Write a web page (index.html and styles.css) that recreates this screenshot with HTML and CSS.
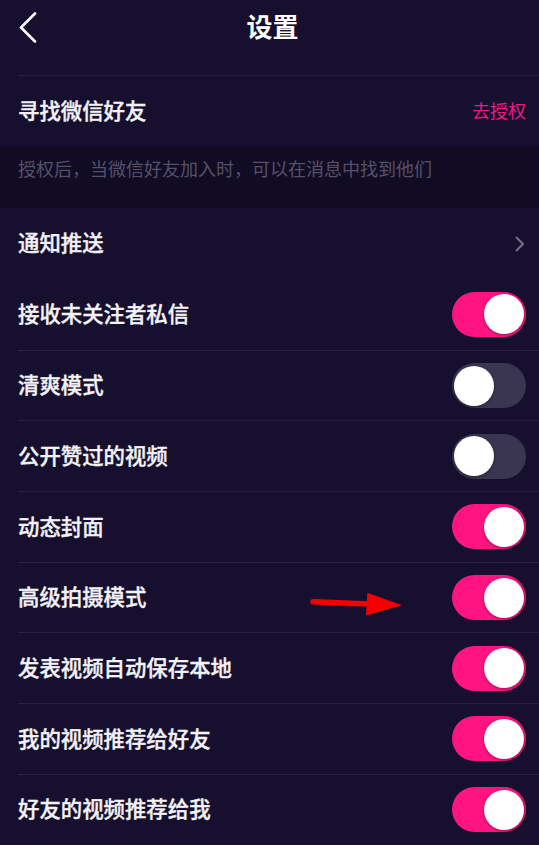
FILE: index.html
```html
<!DOCTYPE html>
<html lang="zh-CN">
<head>
  <meta charset="UTF-8" />
  <meta name="viewport" content="width=device-width, initial-scale=1" />
  <title>设置</title>
  <link rel="stylesheet" href="styles.css">
</head>
<body>

  <header class="topbar">
    <a class="back" href="#">
      <svg width="20" height="32" viewBox="0 0 20 32"><path d="M17 1.5 L3 15.5 L17 29.5" fill="none" stroke="#fff" stroke-width="2.6" stroke-linecap="round" stroke-linejoin="round"/></svg>
    </a>
    <h1>设置</h1>
    <span></span>
  </header>

  <section class="group">
    <div class="row line">
      <span class="label">寻找微信好友</span>
      <a class="action" href="#">去授权</a>
    </div>
  </section>

  <p class="hint">授权后，当微信好友加入时，可以在消息中找到他们</p>

  <section class="group">
    <div class="row">
      <span class="label">通知推送</span>
      <svg class="more" width="10" height="16" viewBox="0 0 10 16"><path d="M1.5 1.5 L8 8 L1.5 14.5" fill="none" stroke="#76718a" stroke-width="2" stroke-linecap="round" stroke-linejoin="round"/></svg>
    </div>
    <div class="row">
      <span class="label">接收未关注者私信</span>
      <span class="switch on"></span>
    </div>
    <div class="row line">
      <span class="label">清爽模式</span>
      <span class="switch"></span>
    </div>
    <div class="row line">
      <span class="label">公开赞过的视频</span>
      <span class="switch"></span>
    </div>
    <div class="row line">
      <span class="label">动态封面</span>
      <span class="switch on"></span>
    </div>
    <div class="row line">
      <span class="label">高级拍摄模式</span>
      <svg class="pointer" width="100" height="32" viewBox="0 0 100 32">
        <line x1="5" y1="12.8" x2="62" y2="15" stroke="#f40000" stroke-width="5.5" stroke-linecap="round"/>
        <polygon points="59.3,3.7 94,16.3 58,26.5" fill="#f40000"/>
      </svg>
      <span class="switch on"></span>
    </div>
    <div class="row line">
      <span class="label">发表视频自动保存本地</span>
      <span class="switch on"></span>
    </div>
    <div class="row line">
      <span class="label">我的视频推荐给好友</span>
      <span class="switch on"></span>
    </div>
    <div class="row line">
      <span class="label">好友的视频推荐给我</span>
      <span class="switch on"></span>
    </div>
  </section>

</body>
</html>
```

FILE: styles.css
```css
body {
  margin: 0;
  background: #16102e;
  color: #f3f2f6;
  font-family: "Noto Sans CJK SC", "Noto Sans", sans-serif;
  width: 539px;
  height: 845px;
  overflow: hidden;
}
.topbar {
  height: 55px;
  margin-bottom: 20px;
  display: grid;
  grid-template-columns: 1fr auto 1fr;
  align-items: center;
}
.back {
  display: flex;
  padding-left: 18px;
}
.topbar h1 {
  margin: 0 0 3px;
  font-size: 26px;
  font-weight: 700;
  color: #fff;
  line-height: 1;
  padding-left: 6px;
}
.row {
  position: relative;
  height: 70.7px;
  box-sizing: border-box;
  margin-left: 18px;
  padding-right: 13px;
  display: flex;
  align-items: center;
  justify-content: space-between;
}
.group .row:first-child {
  height: 71px;
}
.row.line {
  border-top: 1px solid #28233f;
}
.label {
  font-size: 21.4px;
  font-weight: 500;
  line-height: 1;
  padding-bottom: 3px;
  -webkit-text-stroke: 0.35px currentColor;
}
.action {
  font-size: 18px;
  line-height: 1;
  padding-bottom: 2px;
  color: #f0177f;
  text-decoration: none;
}
.hint {
  margin: 0;
  height: 62px;
  box-sizing: border-box;
  padding: 13px 18px 0;
  line-height: 18px;
  background: #110c24;
  color: #55516a;
  font-size: 18px;
}
.more {
  margin-right: 1px;
}
.switch {
  position: relative;
  width: 74px;
  height: 45px;
  border-radius: 23px;
  background: #3a3550;
  box-sizing: border-box;
}
.switch::after {
  content: "";
  position: absolute;
  top: 2.5px;
  left: 2px;
  width: 40px;
  height: 40px;
  border-radius: 50%;
  background: #fff;
  box-shadow: 0 1px 3px rgba(0, 0, 0, 0.35);
}
.switch.on {
  background: #ff1480;
  box-shadow: inset -2px 0 0 #d8176f;
}
.switch.on::after {
  left: auto;
  right: 2px;
}
.pointer {
  position: absolute;
  left: 290px;
  top: 26px;
}
```
